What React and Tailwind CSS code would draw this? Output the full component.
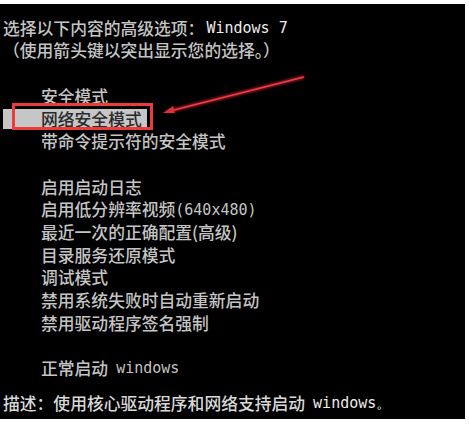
import React from "react";

const cjk = "font-['Noto_Sans_CJK_SC',sans-serif]";
const mono = "font-['DejaVu_Sans_Mono',monospace] text-[15px]";

function Row({ children, indent = true }) {
  return (
    <div className={`h-[22.7px] flex items-center whitespace-nowrap ${indent ? "pl-[41px]" : "pl-[3px]"}`}>
      {children}
    </div>
  );
}

export default function App() {
  return (
    <div className="relative bg-white w-[469px] h-[424px] pt-[4px] overflow-hidden">
      <div className={`bg-black w-[465px] h-[415px] pt-[13px] text-[16.8px] font-medium text-[#c4c4c4] ${cjk}`}>
        <Row indent={false}>
          <span>选择以下内容的高级选项：</span>
          <span className={`${mono} text-[#ececec] ml-[2px]`}>Windows 7</span>
        </Row>
        <Row indent={false}>
          <span>（使用箭头键以突出显示您的选择。）</span>
        </Row>
        <Row indent={false}></Row>
        <Row>安全模式</Row>
        <div className="h-[22.7px] flex items-center pl-[3px]">
          <div className="h-[20px] w-[144px] bg-[#c6c6c6] pl-[38px] flex items-center text-[#2a2a2a] whitespace-nowrap">
            网络安全模式
          </div>
        </div>
        <Row>带命令提示符的安全模式</Row>
        <Row indent={false}></Row>
        <Row>启用启动日志</Row>
        <Row>
          <span>启用低分辨率视频</span>
          <span className={mono}>(640x480)</span>
        </Row>
        <Row>
          <span>最近一次的正确配置</span>
          <span>(高级)</span>
        </Row>
        <Row>目录服务还原模式</Row>
        <Row>调试模式</Row>
        <Row>禁用系统失败时自动重新启动</Row>
        <Row>禁用驱动程序签名强制</Row>
        <Row indent={false}></Row>
        <Row>
          <span>正常启动</span>
          <span className={`${mono} ml-[8px]`}>windows</span>
        </Row>
        <div className="mt-[11.8px]">
          <Row indent={false}>
            <span className="text-[#d8d8d8]">描述：使用核心驱动程序和网络支持启动</span>
            <span className={`${mono} ml-[8px] text-[#ececec]`}>windows。</span>
          </Row>
        </div>
      </div>

      <div className="absolute left-[12px] top-[103px] w-[141px] h-[27px] border-[3px] border-[#ec3b3b]"></div>

      <svg className="absolute left-0 top-0" width="469" height="424" viewBox="0 0 469 424">
        <defs>
          <filter id="glow" x="-20%" y="-50%" width="140%" height="200%">
            <feGaussianBlur stdDeviation="1.2" />
          </filter>
        </defs>
        <line x1="304" y1="77" x2="170" y2="111" stroke="#c0202a" strokeWidth="4" filter="url(#glow)" opacity="0.7" />
        <line x1="304" y1="77" x2="170" y2="111" stroke="#e8404a" strokeWidth="1.6" />
        <polygon points="163,113 173,106 175,113" fill="#e03038" />
      </svg>
    </div>
  );
}
